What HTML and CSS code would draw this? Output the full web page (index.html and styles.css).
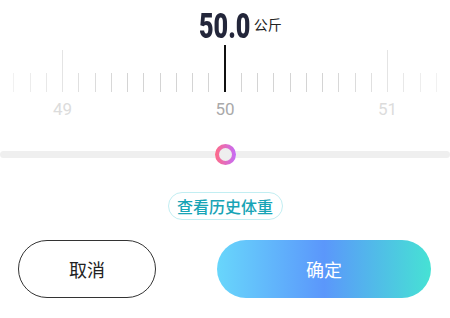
FILE: index.html
```html
<!DOCTYPE html>
<html lang="zh-CN">
<head>
    <meta charset="UTF-8">
    <meta name="viewport" content="width=device-width, initial-scale=1.0">
    <title>体重</title>
    <link rel="stylesheet" href="styles.css">
</head>
<body>
    <div class="picker">
        <div class="reading">
            <span></span>
            <span class="value">50.0</span>
            <span class="unit">公斤</span>
        </div>

        <div class="ticks">
            <i class="tick"></i><i class="tick"></i><i class="tick"></i>
            <i class="tick major"></i>
            <i class="tick"></i><i class="tick"></i><i class="tick"></i><i class="tick"></i><i class="tick"></i>
            <i class="tick"></i><i class="tick"></i><i class="tick"></i><i class="tick"></i>
            <i class="tick current"></i>
            <i class="tick"></i><i class="tick"></i><i class="tick"></i><i class="tick"></i>
            <i class="tick"></i><i class="tick"></i><i class="tick"></i><i class="tick"></i><i class="tick"></i>
            <i class="tick major"></i>
            <i class="tick"></i><i class="tick"></i><i class="tick"></i>
        </div>

        <div class="labels">
            <span>49</span>
            <span class="active">50</span>
            <span>51</span>
        </div>

        <div class="track">
            <div class="knob"></div>
        </div>

        <div class="history">
            <button class="history-btn">查看历史体重</button>
        </div>

        <div class="actions">
            <button class="btn cancel">取消</button>
            <button class="btn confirm">确定</button>
        </div>
    </div>
</body>
</html>
```

FILE: styles.css
```css
body {
    margin: 0;
    background: #fff;
    font-family: Roboto, "Noto Sans CJK SC", sans-serif;
}
.picker {
    width: 450px;
    height: 318px;
    overflow: hidden;
}
.reading {
    display: grid;
    grid-template-columns: 1fr auto 1fr;
    align-items: center;
    height: 45px;
}
.value {
    display: inline-block;
    font-family: Roboto, sans-serif;
    font-weight: 900;
    font-size: 35px;
    line-height: 45px;
    color: #23263a;
    transform: scaleX(0.72);
    margin: 0 -9px;
    padding-top: 4px;
}
.unit {
    font-family: "Noto Sans CJK SC", sans-serif;
    font-size: 14px;
    color: #222;
    padding-left: 2px;
    margin-top: -1px;
}
.ticks {
    display: flex;
    justify-content: center;
    align-items: flex-end;
    height: 47px;
    -webkit-mask-image: linear-gradient(to right, rgba(0,0,0,0.25), #000 28%, #000 72%, rgba(0,0,0,0.25));
    mask-image: linear-gradient(to right, rgba(0,0,0,0.25), #000 28%, #000 72%, rgba(0,0,0,0.25));
}
.tick {
    width: 16.25px;
    height: 19px;
    flex-shrink: 0;
    display: flex;
    justify-content: center;
}
.tick::after {
    content: '';
    width: 1px;
    height: 100%;
    background: #d4d4d4;
}
.tick.major {
    height: 42px;
}
.tick.current {
    height: 47px;
}
.tick.current::after {
    width: 2px;
    background: #111;
}
.labels {
    display: flex;
    justify-content: center;
    gap: 122.5px;
    margin-top: 6px;
    height: 22px;
}
.labels span {
    width: 40px;
    text-align: center;
    font-size: 17px;
    line-height: 22px;
    color: #dcdcdc;
}
.labels .active {
    color: #a9a9a9;
}
.track {
    display: flex;
    justify-content: center;
    align-items: center;
    height: 7px;
    margin-top: 31px;
    background: #efefef;
    border-radius: 4px;
}
.knob {
    flex-shrink: 0;
    width: 21px;
    height: 21px;
    border-radius: 50%;
    background: linear-gradient(to right, #ff6b86, #c56cf8);
    display: flex;
    justify-content: center;
    align-items: center;
}
.knob::after {
    content: '';
    width: 13px;
    height: 13px;
    border-radius: 50%;
    background: #eeeeee;
}
.history {
    display: flex;
    justify-content: center;
    margin-top: 34px;
}
.history-btn {
    height: 28px;
    width: 115px;
    padding: 0;
    border: 1px solid #c2eef2;
    border-radius: 14px;
    background: #fff;
    color: #17a4b6;
    font-family: "Noto Sans CJK SC", sans-serif;
    font-weight: 500;
    font-size: 16px;
    cursor: pointer;
}
.actions {
    display: flex;
    gap: 61px;
    padding-left: 18px;
    margin-top: 20px;
}
.btn {
    height: 58px;
    border-radius: 29px;
    font-family: "Noto Sans CJK SC", sans-serif;
    font-size: 18px;
    cursor: pointer;
}
.cancel {
    width: 138px;
    border: 1.5px solid #333;
    background: #fff;
    color: #222;
}
.confirm {
    width: 214px;
    border: none;
    color: #fff;
    background: linear-gradient(to right, #68d6fb, #5b97fb 50%, #46e2d4);
}
```
